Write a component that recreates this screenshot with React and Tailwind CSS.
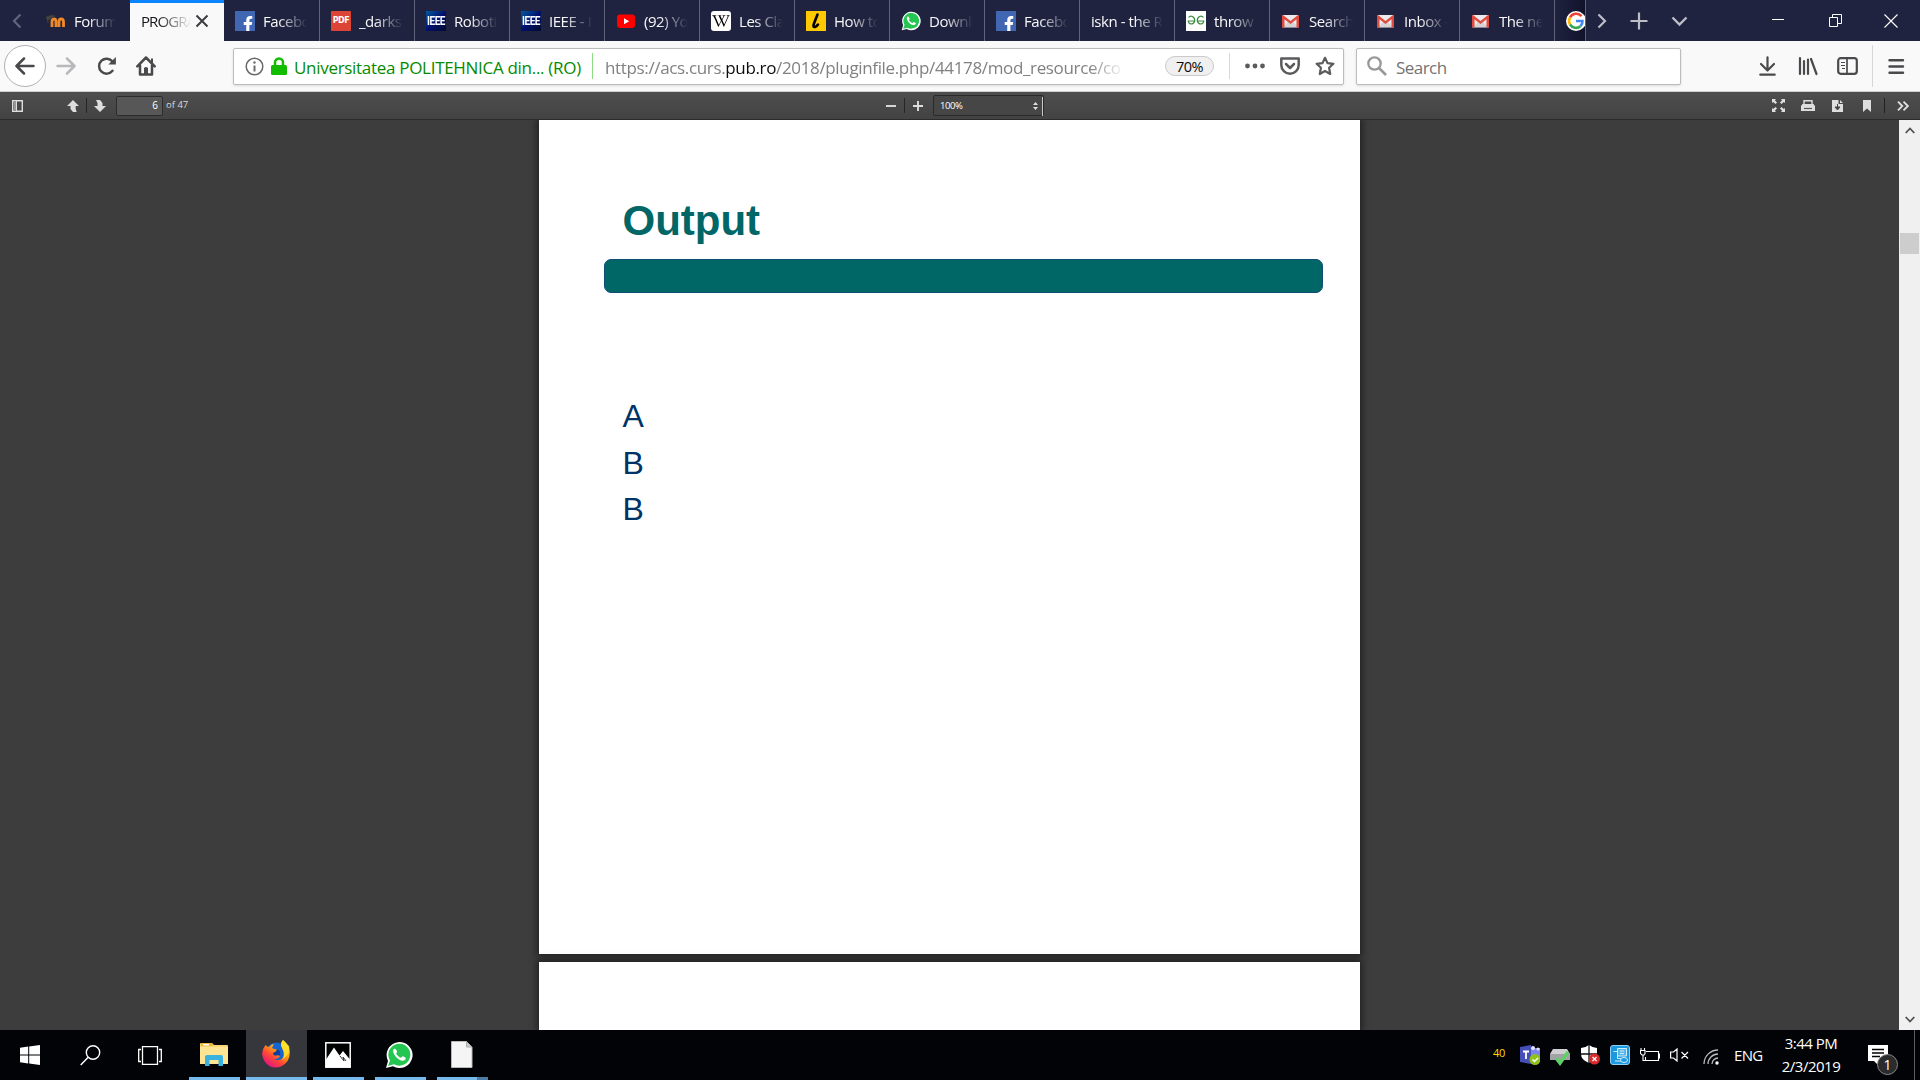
import React from "react";
import { FaFacebookF, FaWikipediaW } from "react-icons/fa";

const FADE = "[mask-image:linear-gradient(to_right,black_35%,transparent_100%)]";

const Fb = () => (
  <div className="flex h-5 w-5 items-end justify-end overflow-hidden bg-[#4267b2] text-white">
    <FaFacebookF size={16} className="-mr-px -mb-px" />
  </div>
);
const Ieee = () => (
  <div className="flex h-5 w-5 items-center justify-center bg-linear-to-br from-[#005aa0] via-[#00106e] to-[#000b2e] font-['Roboto',sans-serif] text-[10px] font-bold tracking-[-0.5px] text-white">
    <span className="scale-y-125">IEEE</span>
  </div>
);
const Wa = ({ size = 20 }) => (
  <svg width={size} height={size} viewBox="0 0 28 28">
    <path d="M1 27 3 20A13 13 0 1 1 8 25.300Z" fill="#fff" />
    <path d="M3 25 5 19.500A11 11 0 1 1 9 23.300Z" fill="#25c551" />
    <path d="M10.300 8c-.8-.5-1.700.1-2 1-1.200 3.500 4.500 10.300 8.800 10.700 2 .2 3.600-.8 3.700-2.500 0-.7-2.500-1.900-3.200-1.900-.6 0-1.100 1.600-1.700 1.500-1.700-.3-4.200-2.700-4.700-4.200-.2-.6 1-1.200.9-1.800 0-.6-1-2.500-1.800-2.800Z" fill="#fff" />
  </svg>
);
const Gmail = () => (
  <svg width="20" height="20" viewBox="0 0 20 20">
    <path d="M1.500 4h16v12.500h-16Z" fill="#eceaea" />
    <path d="m2 16 6-6 1.500 1.500L11 10l6 6Z" fill="#d6d4d4" />
    <path d="M1 4.500Q1 4 2 4l7.500 6L17 4q1 0 1 .5v12h-2.500V8.300L9.500 13 3.500 8.300v8.200H1Z" fill="#e04a3f" />
  </svg>
);
const Moodle = () => (
  <svg width="20" height="20" viewBox="0 0 20 20">
    <path d="M6 16v-5.500q0-2.500 2-2.500t2 2.500V16M13 16v-5.500q0-2.500 2.200-2.500t2.300 2.500V16" fill="none" stroke="#f08a28" strokeWidth="2.800" />
    <path d="m0 6 6-2 3 1-5 3-2 1v3" fill="#4a4545" stroke="#3b3637" />
  </svg>
);
const Pdf = () => (
  <div className="flex h-5 w-5 items-center justify-center rounded-[1px] bg-[#db4437] font-['DejaVu_Sans',sans-serif] text-[8px] font-bold text-white">PDF</div>
);
const Yt = () => (
  <svg width="20" height="20" viewBox="0 0 20 20">
    <rect x="1" y="3.500" width="18" height="13.500" rx="3" fill="#f00" />
    <path d="m8 7.300 5.200 3L8 13.300Z" fill="#fff" />
  </svg>
);
const Wiki = () => (
  <div className="flex h-5 w-5 items-center justify-center rounded-[3px] bg-white text-black"><FaWikipediaW size={18} /></div>
);
const Lib = () => (
  <div className="flex h-5 w-5 items-center justify-center bg-[#ffc800]">
    <svg width="20" height="20" viewBox="0 0 20 20"><path d="M11.500 3.500 8 12.500q-1.500 4 1 3.500 1.500-.4 3-2.500" fill="none" stroke="#000" strokeWidth="2.600" strokeLinecap="round" /></svg>
  </div>
);
const Gfg = () => (
  <svg width="20" height="20" viewBox="0 0 20 20">
    <rect width="20" height="20" fill="#fff" />
    <path d="M2.500 6.500Q4 4.500 6.500 5.500 9 7 8.700 10q-.8 3-3.700 3-2.500-.4-2.800-3H9M17.500 6.500Q16 4.500 13.500 5.500 11 7 11.300 10q.8 3 3.700 3 2.500-.4 2.800-3H11" fill="none" stroke="#3d8c41" strokeWidth="1.200" />
  </svg>
);

const TABS = [
  { icon: <Fb />, label: "Facebook" },
  { icon: <Pdf />, label: "_darkside" },
  { icon: <Ieee />, label: "Robotics" },
  { icon: <Ieee />, label: "IEEE - IE" },
  { icon: <Yt />, label: "(92) You" },
  { icon: <Wiki />, label: "Les Clay" },
  { icon: <Lib />, label: "How to" },
  { icon: <Wa />, label: "Downlo" },
  { icon: <Fb />, label: "Facebook" },
  { icon: null, label: "iskn - the Re" },
  { icon: <Gfg />, label: "throw a" },
  { icon: <Gmail />, label: "Search r" },
  { icon: <Gmail />, label: "Inbox - c" },
  { icon: <Gmail />, label: "The new" },
];

function Tab({ icon, label }) {
  return (
    <div className="flex h-full w-[95px] shrink-0 items-center border-l border-[#62637a] pl-[11px] first-of-type:border-l-0">
      {icon && <div className="mr-2 h-5 w-5 shrink-0">{icon}</div>}
      <div className={icon ? "w-11 overflow-hidden whitespace-nowrap pt-px " + FADE : "w-[72px] overflow-hidden whitespace-nowrap pt-px [mask-image:linear-gradient(to_right,black_60%,transparent_100%)]"}>
        {label}
      </div>
    </div>
  );
}

function TabBar() {
  return (
    <div className="flex h-[41px] items-stretch bg-[#202340] text-[15px] tracking-[-0.45px] text-[#f9f9fa]">
      <div className="flex w-[34px] items-center pl-[10px]">
        <svg width="14" height="16" viewBox="0 0 14 16"><path d="M10.500 1.500 4 8l6.500 6.500" fill="none" stroke="#62647a" strokeWidth="2.200" /></svg>
      </div>
      <div className="flex w-24 items-center pl-3">
        <Moodle />
        <div className={"ml-2 w-[42px] overflow-hidden whitespace-nowrap pt-px " + FADE}>Forum:</div>
      </div>
      <div className="flex w-[94px] items-center border-t-[3px] border-[#0a84ff] bg-[#f9f9fa] pb-[2px] pl-[11px] text-[#15141a]">
        <div className="w-[50px] overflow-hidden whitespace-nowrap pt-px tracking-[-0.9px] [mask-image:linear-gradient(to_right,black_35%,transparent_100%)]">PROGRA</div>
        <svg className="ml-1" width="14" height="14" viewBox="0 0 14 14"><path d="m1.500 1.500 11 11m0-11-11 11" stroke="#3d3d40" strokeWidth="2" /></svg>
      </div>
      <div className="flex">{TABS.map((t, i) => <Tab key={i} {...t} />)}</div>
      <div className="flex w-8 items-center overflow-hidden border-x border-[#62637a] bg-linear-to-r from-[#202340] to-[#11132b] pl-[11px]">
        <svg className="shrink-0" width="20" height="20" viewBox="0 0 20 20">
          <circle cx="10" cy="10" r="10" fill="#fff" />
          <path d="M15.500 5.200A7 7 0 0 0 4 6.500" fill="none" stroke="#ea4335" strokeWidth="2.600" />
          <path d="M4 6.500a7 7 0 0 0 0 7" fill="none" stroke="#fbbc05" strokeWidth="2.600" />
          <path d="M4 13.500a7 7 0 0 0 10.500 1.700" fill="none" stroke="#34a853" strokeWidth="2.600" />
          <path d="M14.500 15.200a7 7 0 0 0 2-5.200H10" fill="none" stroke="#4285f4" strokeWidth="2.600" />
        </svg>
      </div>
      <div className="flex grow items-center">
        <svg className="ml-[9px]" width="14" height="16" viewBox="0 0 14 16"><path d="M3.500 1.500 10 8l-6.500 6.500" fill="none" stroke="#bcbdc6" strokeWidth="2.200" /></svg>
        <svg className="ml-5" width="20" height="20" viewBox="0 0 20 20"><path d="M10 1.500v17M1.500 10h17" fill="none" stroke="#bcbdc6" strokeWidth="2.200" /></svg>
        <svg className="ml-[22px]" width="17" height="14" viewBox="0 0 17 14"><path d="m1.500 3.500 7 7 7-7" fill="none" stroke="#bcbdc6" strokeWidth="2.400" /></svg>
        <svg className="ml-[84px] mb-0.5" width="13" height="13" viewBox="0 0 13 13"><path d="M0 6.500h12" stroke="#fff" /></svg>
        <svg className="ml-11" width="13" height="13" viewBox="0 0 13 13"><path d="M.5 3.500h8v9h-8ZM3.500 3V.5h9v9H9" fill="none" stroke="#fff" /></svg>
        <svg className="ml-[42px]" width="14" height="14" viewBox="0 0 14 14"><path d="m.5.5 13 13m0-13-13 13" stroke="#fff" strokeWidth="1.100" /></svg>
      </div>
    </div>
  );
}

function NavBar() {
  const s = { fill: "none", stroke: "#4a4a4c", strokeWidth: 2.5, strokeLinecap: "round", strokeLinejoin: "round" };
  return (
    <div className="flex h-[51px] items-center border-b border-[#cfcfd1] bg-[#f9f9fa] text-[17px] text-[#737373]">
      <div className="ml-1 flex h-[42px] w-[42px] items-center justify-center rounded-full border border-[#b1b1b3] bg-white">
        <svg width="20" height="20" viewBox="0 0 20 20"><path d="M18.500 10H2m7-7.500L1.500 10 9 17.500" {...s} /></svg>
      </div>
      <svg className="ml-[10px]" width="20" height="20" viewBox="0 0 20 20"><path d="M1.500 10H18m-7-7.500 7.500 7.500-7.500 7.500" {...s} stroke="#b9b9bb" /></svg>
      <svg className="ml-[21px]" width="20" height="20" viewBox="0 0 20 20"><path d="M15.500 14.800A7.500 7.500 0 1 1 15.500 5.500" {...s} /><path d="M18.900 1v7.500h-7.500Z" fill="#4a4a4c" /></svg>
      <svg className="ml-[19px]" width="20" height="20" viewBox="0 0 20 20"><path d="M1.300 10.300 10 1.500l8.700 8.800M4 9.500v9h12v-9" {...s} /><path d="M15 2.500h2V7h-2ZM8 12q2-2 4 0v7H8Z" fill="#4a4a4c" /></svg>

      <div className="ml-[77px] flex h-[37px] w-[1111px] items-center rounded-[2px] border border-[#bcbcbe] bg-white shadow-sm">
        <svg className="ml-[11px] shrink-0" width="19" height="19" viewBox="0 0 19 19"><circle cx="9.500" cy="9.500" r="8.300" fill="none" stroke="#6a6a6c" strokeWidth="1.500" /><path d="M9.500 8.500v6" stroke="#6a6a6c" strokeWidth="2" /><circle cx="9.500" cy="5.500" r="1.200" fill="#6a6a6c" /></svg>
        <svg className="ml-[7px] shrink-0" width="16" height="18" viewBox="0 0 16 18"><path d="M4 9V5.500a4 4 0 0 1 8 0V9" fill="none" stroke="#12bc00" strokeWidth="2.500" /><rect y="8" width="16" height="10" rx="1.500" fill="#12bc00" /></svg>
        <div className="ml-[7px] w-[294px] shrink-0 whitespace-nowrap pt-[4px] tracking-[-0.300px] text-[#058b00]">Universitatea POLITEHNICA din... (RO)</div>
        <div className="ml-1 h-[26px] w-px shrink-0 bg-[#8fdb8a]" />
        <div className="ml-3 w-[520px] shrink-0 overflow-hidden whitespace-nowrap pt-[4px] tracking-[-0.350px] text-[#818183] [mask-image:linear-gradient(to_right,black_93%,transparent_100%)]">
          https://acs.curs.<span className="text-[#0c0c0d]">pub.ro</span>/2018/pluginfile.php/44178/mod_resource/co
        </div>
        <div className="ml-10 flex h-5 w-[49px] shrink-0 items-center justify-center rounded-full border border-[#cacacb] bg-[#f0f0f1] pt-px text-[14.500px] tracking-[-0.600px] text-[#0c0c0d]">70%</div>
        <div className="ml-[15px] h-[26px] w-px shrink-0 bg-[#d7d7db]" />
        <svg className="ml-[15px] shrink-0" width="20" height="20" viewBox="0 0 20 20" fill="#5b5b5d"><circle cx="2.500" cy="10" r="2.400" /><circle cx="10" cy="10" r="2.400" /><circle cx="17.500" cy="10" r="2.400" /></svg>
        <svg className="ml-[15px] shrink-0" width="20" height="20" viewBox="0 0 20 20"><path d="M1.300 2.500h17.400v6.500a8.700 8.700 0 0 1-17.400 0ZM6 8l4 4 4-4" {...s} stroke="#5b5b5d" /></svg>
        <svg className="ml-[15px] shrink-0" width="20" height="20" viewBox="0 0 20 20"><path d="m10 1.800 2.500 5.300 5.900.7-4.300 4 1.100 6.200L10 15l-5.200 3 1.100-6.200-4.300-4 5.900-.7Z" {...s} strokeWidth="2.200" stroke="#5b5b5d" /></svg>
      </div>

      <div className="ml-3 flex h-[37px] w-[325px] items-center rounded-[2px] border border-[#bcbcbe] bg-white shadow-sm">
        <svg className="ml-[10px]" width="20" height="20" viewBox="0 0 20 20"><circle cx="7.500" cy="7.500" r="6.200" fill="none" stroke="#98989a" strokeWidth="2.300" /><path d="m12 12 7 7" stroke="#98989a" strokeWidth="2.700" /></svg>
        <div className="ml-[9px] pt-[4px] tracking-[-0.550px]">Search</div>
      </div>

      <svg className="ml-[78px]" width="17" height="20" viewBox="0 0 17 20"><path d="M8.500 1.300V14M2 8l6.500 6.500L15 8M1.300 18.700h14.400" {...s} strokeWidth="2.200" /></svg>
      <svg className="ml-[22px]" width="20" height="20" viewBox="0 0 20 20"><path d="M2 2v16M6 5v13M10 3.500v14.500M13 3l5.500 15" {...s} strokeWidth="2.200" /></svg>
      <svg className="ml-[19px]" width="21" height="18" viewBox="0 0 21 18"><rect x="1.200" y="1.200" width="18.600" height="15.600" rx="2.500" {...s} strokeWidth="2.200" /><path d="M10 1v16" stroke="#4a4a4c" strokeWidth="1.700" /><path d="M4 5.500h4M4 8.500h4M5 11.500h3" stroke="#4a4a4c" strokeWidth="1.200" /></svg>
      <div className="ml-[14px] h-[42px] w-px bg-[#d7d7db]" />
      <svg className="ml-[15px]" width="17" height="17" viewBox="0 0 17 17"><path d="M1.500 2.300h13.500M1.500 8.500h13.500M1.500 14.700h13.500" {...s} strokeWidth="2.400" /></svg>
    </div>
  );
}

function PdfToolbar() {
  const f = "#dedede";
  return (
    <div className="flex h-7 items-center border-b border-[#2b2b2b] bg-linear-to-b from-[#4e4e4e] to-[#434343] text-[9px] text-[#d9d9d9]">
      <svg className="ml-3" width="11" height="12" viewBox="0 0 11 12"><path d="M.7.700h9.600v10.600H.7Z" fill="none" stroke={f} strokeWidth="1.400" /><path d="M2 2h2v8H2Z" fill="#999" /><path d="M4.500 1v10" stroke={f} /></svg>
      <svg className="ml-11" width="12" height="12" viewBox="0 0 12 12"><path d="M6 0 12 6H8.700v3l1 3H6L3.500 9V6H0Z" fill={f} /></svg>
      <div className="ml-[7px] h-[15px] w-px bg-[#262626]" />
      <svg className="ml-[7px]" width="12" height="12" viewBox="0 0 12 12"><path d="M2 0h4l2.500 3v3H12L6 12 0 6h3.500V3Z" fill={f} /></svg>
      <div className="ml-[10px] flex h-5 w-[47px] items-center justify-end rounded-[2px] border border-[#2c2c2c] bg-[#575757] pr-[4px] text-[10px] text-white">6</div>
      <div className="ml-[3px] w-[24px] whitespace-nowrap text-[9.500px]">of 47</div>
      <svg className="ml-[696px]" width="10" height="10" viewBox="0 0 10 10"><path d="M0 5h10" stroke={f} strokeWidth="1.900" /></svg>
      <div className="ml-2 h-[15px] w-px bg-[#262626]" />
      <svg className="ml-2" width="10" height="10" viewBox="0 0 10 10"><path d="M0 5h10M5 0v10" stroke={f} strokeWidth="1.900" /></svg>
      <div className="ml-[10px] flex h-[21px] w-[111px] items-center justify-between rounded-[2px] border border-[#2a2a2a] bg-[#464646] pt-px pl-[6px] text-[9.500px] tracking-[-0.400px]">
        <span className="text-white">100%</span>
        <div className="flex h-full items-center">
          <svg className="mr-1" width="5" height="8" viewBox="0 0 5 8"><path d="m0 3 2.500-3L5 3ZM0 5l2.500 3L5 5Z" fill={f} /></svg>
          <div className="h-[19px] w-px bg-[#c8c8c8]" />
        </div>
      </div>
      <div className="grow" />
      <svg width="13" height="13" viewBox="0 0 13 13"><path d="M0 0h4L2.900 1.200 5 3.500 3.500 5 1.200 2.900 0 4ZM13 0H9l1.100 1.200L8 3.500 9.500 5l2.300-2.100L13 4ZM0 13h4l-1.100-1.200L5 9.500 3.500 8l-2.300 2.100L0 9ZM13 13H9l1.100-1.200L8 9.500 9.500 8l2.300 2.100L13 9Z" fill={f} /></svg>
      <svg className="ml-4" width="14" height="12" viewBox="0 0 14 12"><path d="M3 4.500V.7h8v3.800" fill="none" stroke={f} strokeWidth="1.400" /><path d="M1.500 4h11L14 6v5H0V6Z" fill={f} /><path d="M3 8.500h8" stroke="#555" strokeWidth="1.200" /></svg>
      <svg className="ml-[17px]" width="11" height="12" viewBox="0 0 11 12"><path d="M0 0h6.500v4H11v8H0ZM8 0l3 3H8Z" fill={f} /><path d="M5.500 4v5M3 7l2.500 3L8 7Z" fill="#444" stroke="#444" /></svg>
      <svg className="ml-5" width="8" height="12" viewBox="0 0 8 12"><path d="M0 0h8v12L4 8.500 0 12Z" fill={f} /></svg>
      <div className="ml-[13px] h-[15px] w-px bg-[#202020]" />
      <svg className="ml-3 mr-[11px]" width="12" height="10" viewBox="0 0 12 10"><path d="m1 .7 4.300 4.300L1 9.300M6.500.7 10.800 5 6.500 9.300" fill="none" stroke={f} strokeWidth="1.900" /></svg>
    </div>
  );
}

function Viewer() {
  return (
    <div className="flex h-[910px] overflow-hidden bg-[#3d3d3d]">
      <div className="flex grow flex-col items-center">
        <div className="flex h-[834px] w-[821px] shrink-0 flex-col bg-white pl-[65px] font-['Liberation_Sans',Arial,sans-serif] shadow-[0_0_7px_2px_rgba(0,0,0,0.5)]">
          <div className="mt-[76px] pl-[18.500px] text-[42px] leading-[50px] font-bold text-[#006666]">Output</div>
          <div className="mt-[13px] h-[34px] w-[719px] rounded-[7px] border border-[#104d75] bg-[#006666]" />
          <div className="mt-[100px] pl-[18.500px] text-[32px] leading-[46.500px] text-[#003366]">
            <div>A</div>
            <div>B</div>
            <div>B</div>
          </div>
        </div>
        <div className="mt-2 h-[68px] w-[821px] shrink-0 bg-white shadow-[0_0_7px_2px_rgba(0,0,0,0.5)]" />
      </div>
      <div className="flex w-[21px] shrink-0 flex-col items-center bg-[#f0f0f0]">
        <svg className="mt-[7px]" width="10" height="7" viewBox="0 0 10 7"><path d="m.7 6 4.300-4.500L9.300 6" fill="none" stroke="#505050" strokeWidth="1.800" /></svg>
        <div className="mt-[99px] h-[21px] w-[19px] bg-[#cdcdcd]" />
        <div className="grow" />
        <svg className="mb-[7px]" width="10" height="7" viewBox="0 0 10 7"><path d="M.7 1 5 5.500 9.300 1" fill="none" stroke="#505050" strokeWidth="1.800" /></svg>
      </div>
    </div>
  );
}

function Taskbar() {
  const bar = "h-[3px] bg-[#76b9ed]";
  return (
    <div className="flex h-[50px] bg-[#010307] text-white">
      <div className="flex w-[189px] items-center">
        <svg className="ml-5" width="20" height="20" viewBox="0 0 20 20"><path d="m0 2.800 8.200-1.200v7.900H0ZM9.200 1.400 20 0v9.500H9.200ZM0 10.500h8.200v7.900L0 17.200ZM9.200 10.500H20V20L9.200 18.600Z" fill="#fff" /></svg>
        <svg className="ml-10" width="21" height="21" viewBox="0 0 21 21"><circle cx="13" cy="7.500" r="6.700" fill="none" stroke="#fff" strokeWidth="1.400" /><path d="M8.200 12.300.7 20" stroke="#fff" strokeWidth="1.500" /></svg>
        <svg className="ml-[37px]" width="24" height="19" viewBox="0 0 24 19"><path d="M4.500.7h15v17.600h-15ZM3 3.500H.7v12H3M21 3.500h2.300v12H21" fill="none" stroke="#fff" strokeWidth="1.300" /></svg>
      </div>
      <div className="flex w-[51px] flex-col">
        <div className="flex grow items-center justify-center pt-px pr-px">
          <svg width="28" height="24" viewBox="0 0 28 24"><path d="M0 2Q0 1 1 1h11l2 2h13q1 0 1 1v18H0Z" fill="#f8d675" /><path d="M0 5h28v17H0Z" fill="#ffe593" /><path d="M1 1h11l1 3H1Z" fill="#ebb535" /><path d="M3 2h6v1.500H3Z" fill="#fff" /><path d="M5 24V15q0-2 2-2h14q2 0 2 2v9h-4.500v-6h-9v6Z" fill="#3bb1e0" /></svg>
        </div>
        <div className={bar} />
      </div>
      <div className="ml-[6px] flex w-[61px] flex-col bg-[#36373c]">
        <div className="flex grow items-center justify-center pt-px pr-[2px]">
          <svg width="28" height="28" viewBox="0 0 28 28">
            <defs>
              <linearGradient id="fx" x1=".8" y1=".1" x2=".25" y2=".9"><stop offset="0" stopColor="#ffe226" /><stop offset=".4" stopColor="#ff9a13" /><stop offset=".7" stopColor="#ff4438" /><stop offset="1" stopColor="#e61b78" /></linearGradient>
            </defs>
            <circle cx="14.500" cy="13" r="10.500" fill="#1565d0" />
            <path d="M14 9q5 1 4 6l-4 4-6-3Z" fill="#123c9c" />
            <path d="M3.500 5Q5 7 7 7q2-3 5-3l-2 4q2 1 5 1.500-.5 2-4 3.500 0 3 3.500 2.500 2-.7 3.500.5-2 3.500-6 3 3 2 6.500.5Q24 17 20 8l-1-3q0-3 2-5 6 5 6.800 12Q28 22 19 26.500 9 30 3 22-3 13 3.500 5Z" fill="url(#fx)" />
            <path d="M21 0q-4 4 0 9 3 5-1 11 9-6 7-14Q25 4 21 0Z" fill="#ffe431" opacity=".85" />
          </svg>
        </div>
        <div className={bar} />
      </div>
      <div className="ml-[6px] flex w-[51px] flex-col">
        <div className="flex grow items-center justify-center pr-[2px] pb-px">
          <svg className="mt-1" width="26" height="26" viewBox="0 0 26 26"><rect x=".8" y=".8" width="24.400" height="24.400" fill="#000" stroke="#fff" strokeWidth="1.500" /><path d="M1 17.500 9 5.500l5.500 8L18 9l7 8.500V25H1Z" fill="#fff" /><path d="m15 14 4 5-1-4 3 4" fill="none" stroke="#333" /></svg>
        </div>
        <div className={bar} />
      </div>
      <div className="ml-[11px] flex w-[51px] flex-col">
        <div className="flex grow items-center justify-center pt-0.5 pr-[3px]"><Wa size={28} /></div>
        <div className={bar} />
      </div>
      <div className="ml-[11px] flex w-[51px] flex-col">
        <div className="flex grow items-center justify-center pt-0.5 pr-[2px]">
          <svg width="22" height="27" viewBox="0 0 22 27"><path d="M.5.500h15L21 6v20.500H.5Z" fill="#f5f5f5" stroke="#b8b8b8" /><path d="M15.500.500V6H21Z" fill="#ccc" stroke="#aaa" /></svg>
        </div>
        <div className="flex h-[3px]"><div className="w-10 bg-[#76b9ed]" /><div className="grow bg-[#4d7ba3]" /></div>
      </div>
      <div className="grow" />
      <div className="flex items-center">
        <div className="w-[27px] pb-1 text-[11px] tracking-[-0.200px] text-[#ffd800]">40</div>
        <svg width="20" height="20" viewBox="0 0 20 20"><path d="M9 3h11v9l-3 4H9Z" fill="#7b83eb" /><circle cx="13" cy="3" r="2" fill="#e3e4ff" /><circle cx="18" cy="4" r="1.500" fill="#e3e4ff" /><path d="m0 2 11-2v19L0 17Z" fill="#464eb8" /><path d="M3 6.500h6M6 6.500V14" stroke="#fff" strokeWidth="1.800" /><circle cx="15" cy="14.500" r="5.500" fill="#8fc31c" /><path d="m12.500 14.500 2 2 3.500-3.500" fill="none" stroke="#fff" strokeWidth="1.500" /></svg>
        <svg className="ml-[10px] mt-1" width="20" height="18" viewBox="0 0 20 18"><path d="M3 1h14l3 5v6H0V6Z" fill="#d0d0d2" /><path d="M0 6h20v6H0Z" fill="#a3a3a7" /><path d="m6 10 4 5 8-11" fill="none" stroke="#5fcf68" strokeWidth="3.500" /></svg>
        <svg className="ml-[10px]" width="20" height="20" viewBox="0 0 20 20"><path d="M9 0q4 3 8 3v6q-1 6-8 9Q1 15 1 9V3q4 0 8-3Z" fill="#fff" /><path d="M9 0v18M1 9h16" stroke="#111" strokeWidth="1.300" /><circle cx="14.500" cy="14" r="5.500" fill="#d92b2b" /><path d="m12.500 12 4 4m0-4-4 4" stroke="#fff" strokeWidth="1.300" /></svg>
        <svg className="ml-[10px]" width="20" height="20" viewBox="0 0 20 20"><rect x=".5" y=".5" width="19" height="19" rx="2.500" fill="#1c98e0" stroke="#8fd0f2" /><path d="M7.500 3.500h9v7.500h-9Z" fill="#57b6ea" stroke="#d0edfc" /><path d="M3.500 6.500h4v7h5M5 16h6M10 6h4M10 8.500h4" fill="none" stroke="#d0edfc" /><ellipse cx="14" cy="15" rx="3.500" ry="2.500" fill="#1c98e0" stroke="#d0edfc" /></svg>
        <svg className="ml-[10px]" width="20" height="14" viewBox="0 0 20 14"><path d="M6 3.500h12.500v9H5.500V9M18.500 6h1v4h-1M1 0v2.500M4.500 0v2.500M.5 2.500h4.500v3l-1 1.500h-2L.5 5.500ZM3 7v5.500h2" fill="none" stroke="#fff" strokeWidth="1.100" /></svg>
        <svg className="ml-[10px]" width="19" height="14" viewBox="0 0 19 14"><path d="M.6 4h3L7 1v12L3.600 10h-3ZM11.500 4l6.500 6.500m0-6.500-6.500 6.500" fill="none" stroke="#fff" strokeWidth="1.200" /></svg>
        <svg className="ml-[14px] mt-1" width="17" height="16" viewBox="0 0 17 16"><path d="M1 15A14 14 0 0 1 15 1M5 15A10 10 0 0 1 15 5M9 15a6 6 0 0 1 6-6" fill="none" stroke="#b9bbc0" strokeWidth="1.300" /><circle cx="14" cy="14" r="1.700" fill="#fff" /></svg>
        <div className="ml-[14px] w-[32px] pt-px text-[15px] tracking-[-0.700px]">ENG</div>
        <div className="mb-px ml-[9px] flex w-[72px] flex-col items-center text-[15px] leading-[23px] tracking-[-0.500px] whitespace-nowrap"><span>3:44 PM</span><span>2/3/2019</span></div>
        <div className="relative mt-[10px] ml-[21px] h-[30px] w-[30px]">
          <svg width="20" height="20" viewBox="0 0 20 20"><path d="M0 0h20v16H10v4l-4-4H0Z" fill="#fff" /><path d="M4 4.500h12M4 8h12M4 11.500h8" stroke="#000" strokeWidth="1.300" /></svg>
          <div className="absolute top-[9px] left-[9px] flex h-[21px] w-[21px] items-center justify-center rounded-full border border-[#8a8a8a] bg-[#2b2b2d] text-[14px]">1</div>
        </div>
        <div className="ml-4 h-full w-px bg-[#5b5c5f]" />
        <div className="w-[5px]" />
      </div>
    </div>
  );
}

export default function App() {
  return (
    <div className="h-[1080px] w-[1920px] overflow-hidden font-['Open_Sans','Noto_Sans',sans-serif]">
      <TabBar />
      <NavBar />
      <PdfToolbar />
      <Viewer />
      <Taskbar />
    </div>
  );
}
